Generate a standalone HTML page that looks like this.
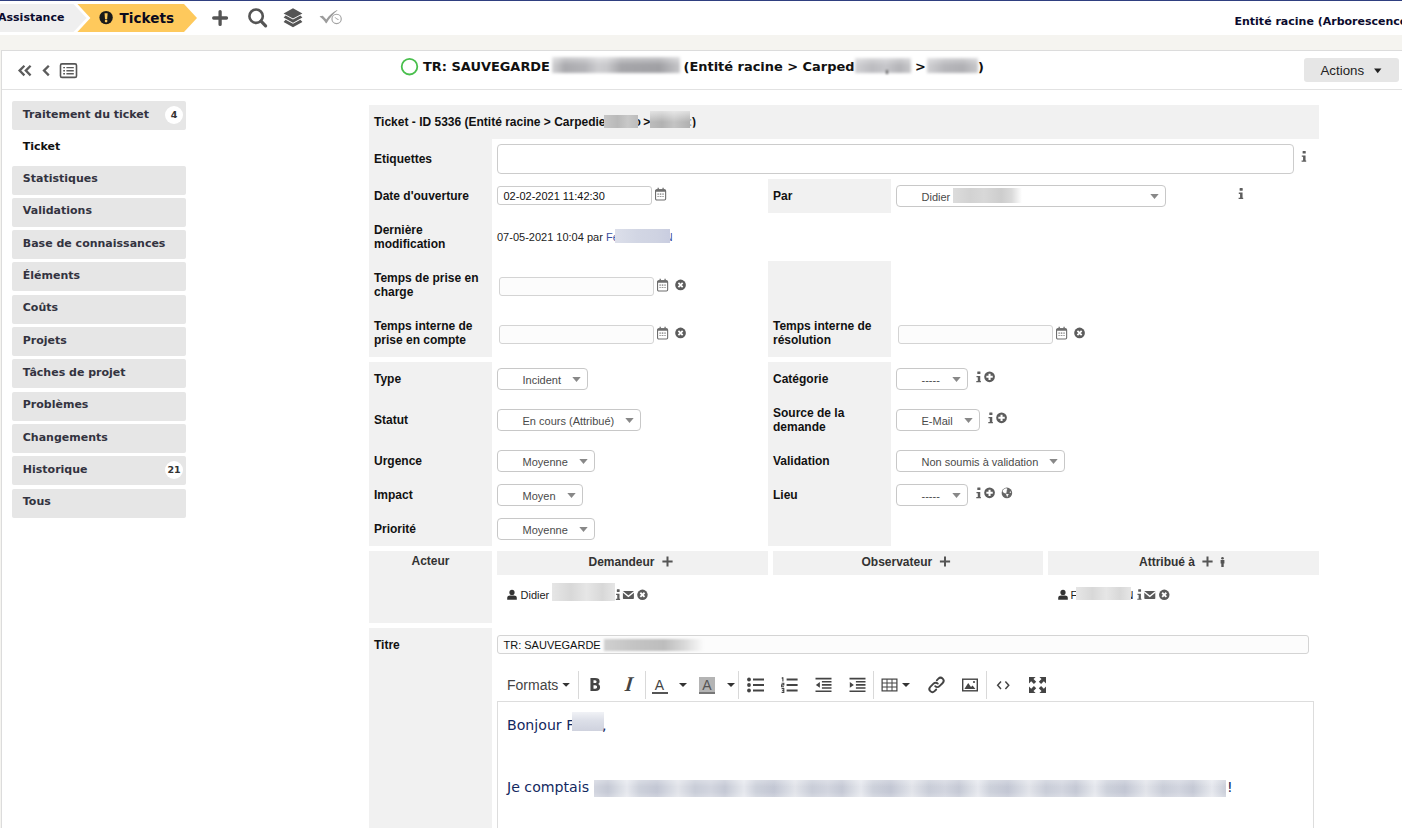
<!DOCTYPE html>
<html lang="fr"><head><meta charset="utf-8"><title>Ticket - ID 5336</title><style>
html,body{margin:0;padding:0}
body{width:1402px;height:828px;overflow:hidden;background:#f5f4f0;position:relative;font-family:"Liberation Sans",Arial,sans-serif}
#p{position:absolute;left:0;top:0;width:1402px;height:828px;overflow:hidden}
#p>div,#p>span,#p>svg{position:absolute;box-sizing:border-box}
#p>svg{overflow:visible}
.t{white-space:nowrap;line-height:1}
.l{font-family:"Liberation Sans",Arial,sans-serif}
.d{font-family:"DejaVu Sans",Verdana,sans-serif}
.b{font-weight:bold}
</style></head><body><div id="p">
<div style="left:0px;top:0px;width:1402px;height:35px;background:#fff;"></div>
<div style="left:0px;top:0px;width:1402px;height:1px;background:#2f3f80;"></div>
<svg style="left:0px;top:4px;" width="92" height="28" viewBox="0 0 92 28"><path d="M0 0H73.5L86.5 14L73.5 28H0z" fill="#efefef"/></svg>
<span class="t d b " style="left:-2px;top:12.19px;font-size:11px;color:#0b0b2e;">Assistance</span>
<svg style="left:77px;top:4px;" width="122" height="28" viewBox="0 0 122 28"><path d="M0.4 0H107L120 14L107 28H0.4L13.4 14z" fill="#fec95c"/></svg>
<svg style="left:99px;top:10px;transform:translate(0.4px,0.9px);" width="13.4" height="13.4" viewBox="0 0 16 16"><circle cx="8" cy="8" r="8" fill="#1a1a1a"/><path d="M6.2 2.9h3.6l-0.5 7h-2.6z" fill="#fec95c"/><circle cx="8" cy="12.2" r="1.6" fill="#fec95c"/></svg>
<span class="t d b " style="left:119.5px;top:12.09px;font-size:13.6px;color:#0a0a1e;">Tickets</span>
<svg style="left:211px;top:9px;" width="18" height="18" viewBox="0 0 18 18"><path d="M9.1 2.6V15.4M2.7 9H15.5" stroke="#555" stroke-width="3.3" stroke-linecap="round" fill="none"/></svg>
<svg style="left:247px;top:8px;" width="21" height="21" viewBox="0 0 21 21"><circle cx="9.1" cy="8.2" r="6.7" fill="none" stroke="#555" stroke-width="2.6"/><path d="M14 13.2L18.6 17.8" stroke="#555" stroke-width="3.2" stroke-linecap="round"/></svg>
<svg style="left:283px;top:8px;" width="20" height="20" viewBox="0 0 20 20"><path d="M10 0.2L19.4 5.4L10 10.6L0.6 5.4z M2.6 7.4L10 11.4L17.4 7.4L19.4 9.6L10 14.8L0.6 9.6z M2.6 11.8L10 15.8L17.4 11.8L19.4 14L10 19.2L0.6 14z" fill="#555"/></svg>
<svg style="left:319px;top:9px;" width="25" height="17" viewBox="0 0 25 17"><path d="M0.8 7.3L3.8 6.8L7.3 10.6C10 6.5 14 2.8 18.1 1L18.4 1.4C14.5 4.5 10.5 9 7.6 14.3L6.9 14.3C5.2 11.5 3 9.2 0.8 7.7z" fill="#9c9c9c"/><circle cx="17.6" cy="9.9" r="4.65" fill="#fff" stroke="#a2a2a2" stroke-width="1.15"/><path d="M16.1 8.3L17.7 10L19.5 10.5" stroke="#a2a2a2" stroke-width="1" fill="none"/></svg>
<span class="t d b " style="left:1234.5px;top:15.69px;font-size:11px;color:#0b0b2e;">Entité racine (Arborescence</span>
<div style="left:1px;top:50px;width:1403px;height:780px;background:#fff;border:1px solid #dcdcdc;"></div>
<div style="left:2px;top:89px;width:1402px;height:1px;background:#e2e2e2;"></div>
<svg style="left:17px;top:64px;transform:translate(0.2px,0.6px);" width="15" height="12" viewBox="0 0 15 12"><path d="M7.2 1.2L2.4 6L7.2 10.8M13.4 1.2L8.6 6L13.4 10.8" fill="none" stroke="#5c5c5c" stroke-width="2.3"/></svg>
<svg style="left:41px;top:64px;transform:translate(0.6px,0.6px);" width="9" height="12" viewBox="0 0 9 12"><path d="M7.2 1.2L2.4 6L7.2 10.8" fill="none" stroke="#5c5c5c" stroke-width="2.3"/></svg>
<svg style="left:59px;top:62px;transform:translate(0px,0.4px);" width="19" height="17" viewBox="0 0 19 17"><rect x="1.5" y="1.5" width="16" height="13.5" rx="1.5" fill="none" stroke="#555" stroke-width="1.6"/><path d="M4.2 5.2h1.8M7.4 5.2h7.4M4.2 8.3h1.8M7.4 8.3h7.4M4.2 11.4h1.8M7.4 11.4h7.4" stroke="#5c5c5c" stroke-width="1.4"/></svg>
<svg style="left:400px;top:57px;transform:translate(0px,0.2px);" width="19" height="19" viewBox="0 0 19 19"><circle cx="9.5" cy="9.5" r="7.8" fill="#fff" stroke="#49bf4d" stroke-width="1.8"/></svg>
<span class="t d b " style="left:423px;top:60.54px;font-size:12.95px;color:#111;">TR: SAUVEGARDE</span>
<div style="left:552px;top:56.5px;width:128px;height:16.5px;background:linear-gradient(180deg,rgba(255,255,255,.45),rgba(255,255,255,0) 50%),linear-gradient(90deg,#d2d2d4 0,#aaaaae 10%,#b4b4b8 26%,#cdcdd0 36%,#c8c8cb 43%,#a5a5a9 54%,#a0a0a4 84%,#c6c6c9 100%);filter:blur(1.4px)"></div>
<span class="t d b " style="left:683.5px;top:60.54px;font-size:12.95px;color:#111;">(Entité racine &gt; Carped</span>
<div style="left:855px;top:57.5px;width:56px;height:15.5px;background:linear-gradient(180deg,rgba(255,255,255,.4),rgba(255,255,255,0) 50%),linear-gradient(90deg,#d0d0d3 0,#bcbcc0 30%,#c6c6ca 55%,#b4b4b8 80%,#c8c8cb 100%);filter:blur(1.4px)"></div>
<div style="left:886.3px;top:70px;width:2.2px;height:3.6px;background:#666;filter:blur(0.8px);"></div>
<span class="t d b " style="left:915px;top:60.54px;font-size:12.95px;color:#111;">&gt;</span>
<div style="left:927px;top:57.5px;width:51px;height:15.5px;background:linear-gradient(180deg,rgba(255,255,255,.4),rgba(255,255,255,0) 50%),linear-gradient(90deg,#d0d0d3 0,#b6b6ba 35%,#b0b0b4 70%,#c8c8cb 100%);filter:blur(1.4px)"></div>
<span class="t d b " style="left:978px;top:60.54px;font-size:12.95px;color:#111;">)</span>
<div style="left:1304px;top:58px;width:95px;height:24px;background:#e6e6e6;border-radius:3px;"></div>
<span class="t l " style="left:1320.5px;top:63.74px;font-size:13.3px;color:#222;">Actions</span>
<svg style="left:1374px;top:68px;transform:translate(0px,0.6px);" width="7.5" height="4.6" viewBox="0 0 8 5"><path d="M0 0h8L4 5z" fill="#222"/></svg>
<div style="left:12px;top:101px;width:174px;height:29px;background:#e6e6e6;border-radius:2px;"></div>
<span class="t d b " style="left:22.8px;top:108.89px;font-size:11px;color:#333340;">Traitement du ticket</span>
<div style="left:165px;top:106px;width:18px;height:18px;background:#fff;border-radius:9px;"></div>
<span class="t d b" style="left:165px;width:18px;text-align:center;top:110.4px;font-size:9.5px;color:#333">4</span>
<span class="t d b " style="left:22.8px;top:140.89px;font-size:11px;color:#111;">Ticket</span>
<div style="left:12px;top:166px;width:174px;height:29px;background:#e6e6e6;border-radius:2px;"></div>
<span class="t d b " style="left:22.8px;top:172.89px;font-size:11px;color:#333340;">Statistiques</span>
<div style="left:12px;top:198px;width:174px;height:29px;background:#e6e6e6;border-radius:2px;"></div>
<span class="t d b " style="left:22.8px;top:204.89px;font-size:11px;color:#333340;">Validations</span>
<div style="left:12px;top:230px;width:174px;height:29px;background:#e6e6e6;border-radius:2px;"></div>
<span class="t d b " style="left:22.8px;top:237.89px;font-size:11px;color:#333340;">Base de connaissances</span>
<div style="left:12px;top:262px;width:174px;height:29px;background:#e6e6e6;border-radius:2px;"></div>
<span class="t d b " style="left:22.8px;top:269.89px;font-size:11px;color:#333340;">Éléments</span>
<div style="left:12px;top:295px;width:174px;height:29px;background:#e6e6e6;border-radius:2px;"></div>
<span class="t d b " style="left:22.8px;top:301.89px;font-size:11px;color:#333340;">Coûts</span>
<div style="left:12px;top:327px;width:174px;height:29px;background:#e6e6e6;border-radius:2px;"></div>
<span class="t d b " style="left:22.8px;top:334.89px;font-size:11px;color:#333340;">Projets</span>
<div style="left:12px;top:359px;width:174px;height:29px;background:#e6e6e6;border-radius:2px;"></div>
<span class="t d b " style="left:22.8px;top:366.89px;font-size:11px;color:#333340;">Tâches de projet</span>
<div style="left:12px;top:392px;width:174px;height:29px;background:#e6e6e6;border-radius:2px;"></div>
<span class="t d b " style="left:22.8px;top:398.89px;font-size:11px;color:#333340;">Problèmes</span>
<div style="left:12px;top:424px;width:174px;height:29px;background:#e6e6e6;border-radius:2px;"></div>
<span class="t d b " style="left:22.8px;top:431.89px;font-size:11px;color:#333340;">Changements</span>
<div style="left:12px;top:456px;width:174px;height:29px;background:#e6e6e6;border-radius:2px;"></div>
<span class="t d b " style="left:22.8px;top:463.89px;font-size:11px;color:#333340;">Historique</span>
<div style="left:165px;top:461px;width:18px;height:18px;background:#fff;border-radius:9px;"></div>
<span class="t d b" style="left:165px;width:18px;text-align:center;top:465.4px;font-size:9.5px;color:#333">21</span>
<div style="left:12px;top:489px;width:174px;height:29px;background:#e6e6e6;border-radius:2px;"></div>
<span class="t d b " style="left:22.8px;top:495.89px;font-size:11px;color:#333340;">Tous</span>
<div style="left:369px;top:105px;width:950px;height:34px;background:#f1f1f1;"></div>
<div style="left:369px;top:139px;width:123px;height:218px;background:#f1f1f1;"></div>
<div style="left:369px;top:362px;width:123px;height:184px;background:#f1f1f1;"></div>
<div style="left:768px;top:179px;width:123px;height:34px;background:#f1f1f1;"></div>
<div style="left:768px;top:261px;width:123px;height:96px;background:#f1f1f1;"></div>
<div style="left:768px;top:362px;width:123px;height:184px;background:#f1f1f1;"></div>
<div style="left:369px;top:551px;width:123px;height:72px;background:#f1f1f1;"></div>
<div style="left:497px;top:551px;width:271px;height:24px;background:#f1f1f1;"></div>
<div style="left:773px;top:551px;width:270px;height:24px;background:#f1f1f1;"></div>
<div style="left:1048px;top:551px;width:271px;height:24px;background:#f1f1f1;"></div>
<div style="left:369px;top:628px;width:123px;height:200px;background:#f1f1f1;"></div>
<span class="t l b " style="left:374px;top:115.84px;font-size:12px;color:#111;">Ticket - ID 5336 (Entité racine &gt; Carpedie</span>
<div style="left:604px;top:115px;width:34.2px;height:13px;background:linear-gradient(90deg,#c6c6c6,#b9b9b9 40%,#c8c8c8 70%,#bcbcbc);filter:blur(0.5px)"></div>
<span class="t l b " style="left:633.6px;top:115.84px;font-size:12px;color:#111;clip-path:inset(0 0 0 4.6px);">o</span>
<span class="t l b " style="left:643.2px;top:115.84px;font-size:12px;color:#111;">&gt;</span>
<div style="left:650.2px;top:111.3px;width:40px;height:16.6px;background:linear-gradient(180deg,rgba(255,255,255,.6),rgba(255,255,255,0) 65%),linear-gradient(90deg,#bcbcbc,#b2b2b2 30%,#c4c4c4 60%,#b0b0b0);filter:blur(0.6px)"></div>
<span class="t l b " style="left:688px;top:115.84px;font-size:12px;color:#111;clip-path:inset(0 0 0 2.6px);">:)</span>
<span class="t l b " style="left:374px;top:152.84px;font-size:12px;color:#111;">Etiquettes</span>
<span class="t l b " style="left:374px;top:189.84px;font-size:12px;color:#111;">Date d'ouverture</span>
<span class="t l b " style="left:374px;top:223.84px;font-size:12px;color:#111;">Dernière</span>
<span class="t l b " style="left:374px;top:237.84px;font-size:12px;color:#111;">modification</span>
<span class="t l b " style="left:374px;top:271.84px;font-size:12px;color:#111;">Temps de prise en</span>
<span class="t l b " style="left:374px;top:285.84px;font-size:12px;color:#111;">charge</span>
<span class="t l b " style="left:374px;top:319.84px;font-size:12px;color:#111;">Temps interne de</span>
<span class="t l b " style="left:374px;top:333.84px;font-size:12px;color:#111;">prise en compte</span>
<span class="t l b " style="left:374px;top:372.84px;font-size:12px;color:#111;">Type</span>
<span class="t l b " style="left:374px;top:413.84px;font-size:12px;color:#111;">Statut</span>
<span class="t l b " style="left:374px;top:454.84px;font-size:12px;color:#111;">Urgence</span>
<span class="t l b " style="left:374px;top:488.84px;font-size:12px;color:#111;">Impact</span>
<span class="t l b " style="left:374px;top:522.84px;font-size:12px;color:#111;">Priorité</span>
<span class="t l b " style="left:773px;top:189.84px;font-size:12px;color:#111;">Par</span>
<span class="t l b " style="left:773px;top:319.84px;font-size:12px;color:#111;">Temps interne de</span>
<span class="t l b " style="left:773px;top:333.84px;font-size:12px;color:#111;">résolution</span>
<span class="t l b " style="left:773px;top:372.84px;font-size:12px;color:#111;">Catégorie</span>
<span class="t l b " style="left:773px;top:407.34px;font-size:12px;color:#111;">Source de la</span>
<span class="t l b " style="left:773px;top:420.84px;font-size:12px;color:#111;">demande</span>
<span class="t l b " style="left:773px;top:454.84px;font-size:12px;color:#111;">Validation</span>
<span class="t l b " style="left:773px;top:488.84px;font-size:12px;color:#111;">Lieu</span>
<span class="t l b " style="left:374px;top:639.14px;font-size:12px;color:#111;">Titre</span>
<div style="left:497px;top:144px;width:797px;height:30px;border:1px solid #ccc;border-radius:4px;background:#fff;"></div>
<svg style="left:1301px;top:150px;transform:translate(0.6px,0.9px);" width="4.6" height="10.9" viewBox="0 0 5 10" preserveAspectRatio="none"><path d="M1.1 0.4Q1.1 0 1.5 0h2.6Q4.5 0 4.5 0.4v1.7Q4.5 2.5 4.1 2.5H1.5Q1.1 2.5 1.1 2.1z M0.2 4.2h4.1v4.7h0.7v1.1H0v-1.1h1.6V5.4H0.2z" fill="#5e5e5e"/></svg>
<div style="left:497px;top:186px;width:155px;height:19px;border:1px solid #ccc;border-radius:3px;background:#fff;"></div>
<span class="t l " style="left:503.5px;top:190.69px;font-size:11px;color:#111;">02-02-2021 11:42:30</span>
<svg style="left:655px;top:187px;transform:translate(0px,0.7px);" width="11.2" height="13" viewBox="0 0 11.2 13"><rect x="0.55" y="2" width="10.1" height="10.3" rx="1.2" fill="#fff" stroke="#6e6e6e" stroke-width="1.1"/><path d="M0.3 4V3.2Q0.3 1.6 1.8 1.6H9.4Q10.9 1.6 10.9 3.2V4z" fill="#6e6e6e"/><path d="M3.2 0v2M8.1 0v2" stroke="#6e6e6e" stroke-width="1.3"/><path d="M2.6 6.4h1.1M5 6.4h1.1M7.5 6.4h1.1M2.6 8.8h1.1M5 8.8h1.1M7.5 8.8h1.1" stroke="#666" stroke-width="1.1"/><path d="M2.3 6.4h6.6M2.3 8.8h6.6" stroke="#bbb" stroke-width="0.6"/></svg>
<span class="t l " style="left:497px;top:232.19px;font-size:11px;color:#222;">07-05-2021 10:04 par</span>
<span class="t l " style="left:606px;top:232.19px;font-size:11px;color:#3a4fa0;">Fe</span>
<div style="left:615.3px;top:228.8px;width:54.8px;height:14px;background:linear-gradient(90deg,#dcdfea,#d2d6e4 40%,#cfd3e2 75%,#c9cde0);filter:blur(0.5px)"></div>
<span class="t l " style="left:664.8px;top:232.19px;font-size:11px;color:#3a4fa0;clip-path:inset(0 0 0 5.4px);">N</span>
<div style="left:499px;top:277px;width:155px;height:19px;border:1px solid #d4d4d4;border-radius:3px;background:#fff;background:#fcfcfc;"></div>
<svg style="left:657px;top:278px;transform:translate(0px,0.7px);" width="11.2" height="13" viewBox="0 0 11.2 13"><rect x="0.55" y="2" width="10.1" height="10.3" rx="1.2" fill="#fff" stroke="#6e6e6e" stroke-width="1.1"/><path d="M0.3 4V3.2Q0.3 1.6 1.8 1.6H9.4Q10.9 1.6 10.9 3.2V4z" fill="#6e6e6e"/><path d="M3.2 0v2M8.1 0v2" stroke="#6e6e6e" stroke-width="1.3"/><path d="M2.6 6.4h1.1M5 6.4h1.1M7.5 6.4h1.1M2.6 8.8h1.1M5 8.8h1.1M7.5 8.8h1.1" stroke="#666" stroke-width="1.1"/><path d="M2.3 6.4h6.6M2.3 8.8h6.6" stroke="#bbb" stroke-width="0.6"/></svg>
<svg style="left:675px;top:279px;transform:translate(0.2px,0.6px);" width="10.7" height="10.7" viewBox="0 0 11 11"><circle cx="5.5" cy="5.5" r="5.5" fill="#5c5c5c"/><path d="M3.3 3.3L7.7 7.7M7.7 3.3L3.3 7.7" stroke="#fff" stroke-width="1.9"/></svg>
<div style="left:499px;top:325px;width:155px;height:19px;border:1px solid #d4d4d4;border-radius:3px;background:#fff;background:#fcfcfc;"></div>
<svg style="left:657px;top:326px;transform:translate(0px,0.7px);" width="11.2" height="13" viewBox="0 0 11.2 13"><rect x="0.55" y="2" width="10.1" height="10.3" rx="1.2" fill="#fff" stroke="#6e6e6e" stroke-width="1.1"/><path d="M0.3 4V3.2Q0.3 1.6 1.8 1.6H9.4Q10.9 1.6 10.9 3.2V4z" fill="#6e6e6e"/><path d="M3.2 0v2M8.1 0v2" stroke="#6e6e6e" stroke-width="1.3"/><path d="M2.6 6.4h1.1M5 6.4h1.1M7.5 6.4h1.1M2.6 8.8h1.1M5 8.8h1.1M7.5 8.8h1.1" stroke="#666" stroke-width="1.1"/><path d="M2.3 6.4h6.6M2.3 8.8h6.6" stroke="#bbb" stroke-width="0.6"/></svg>
<svg style="left:675px;top:327px;transform:translate(0.2px,0.6px);" width="10.7" height="10.7" viewBox="0 0 11 11"><circle cx="5.5" cy="5.5" r="5.5" fill="#5c5c5c"/><path d="M3.3 3.3L7.7 7.7M7.7 3.3L3.3 7.7" stroke="#fff" stroke-width="1.9"/></svg>
<div style="left:898px;top:325px;width:155px;height:19px;border:1px solid #d4d4d4;border-radius:3px;background:#fff;background:#fcfcfc;"></div>
<svg style="left:1056px;top:326px;transform:translate(0px,0.7px);" width="11.2" height="13" viewBox="0 0 11.2 13"><rect x="0.55" y="2" width="10.1" height="10.3" rx="1.2" fill="#fff" stroke="#6e6e6e" stroke-width="1.1"/><path d="M0.3 4V3.2Q0.3 1.6 1.8 1.6H9.4Q10.9 1.6 10.9 3.2V4z" fill="#6e6e6e"/><path d="M3.2 0v2M8.1 0v2" stroke="#6e6e6e" stroke-width="1.3"/><path d="M2.6 6.4h1.1M5 6.4h1.1M7.5 6.4h1.1M2.6 8.8h1.1M5 8.8h1.1M7.5 8.8h1.1" stroke="#666" stroke-width="1.1"/><path d="M2.3 6.4h6.6M2.3 8.8h6.6" stroke="#bbb" stroke-width="0.6"/></svg>
<svg style="left:1074px;top:327px;transform:translate(0.2px,0.6px);" width="10.7" height="10.7" viewBox="0 0 11 11"><circle cx="5.5" cy="5.5" r="5.5" fill="#5c5c5c"/><path d="M3.3 3.3L7.7 7.7M7.7 3.3L3.3 7.7" stroke="#fff" stroke-width="1.9"/></svg>
<div style="left:896px;top:185px;width:270px;height:22px;border:1px solid #c8c8c8;border-radius:4px;background:#fff;"></div>
<span class="t l " style="left:921.5px;top:191.69px;font-size:11px;color:#4a4a4a;">Didier</span>
<svg style="left:1150px;top:194px;" width="9" height="5" viewBox="0 0 9 5"><path d="M0.3 0h8.4L4.5 5z" fill="#888"/></svg>
<div style="left:953px;top:188.2px;width:69px;height:14.5px;background:linear-gradient(90deg,#dcdcdc,#d2d2d2 25%,#d8d8d8 45%,#cdcdcd 70%,#dadada 85%,#fff);filter:blur(0.7px)"></div>
<svg style="left:1238px;top:188px;transform:translate(0.6px,0px);" width="4.6" height="10.9" viewBox="0 0 5 10" preserveAspectRatio="none"><path d="M1.1 0.4Q1.1 0 1.5 0h2.6Q4.5 0 4.5 0.4v1.7Q4.5 2.5 4.1 2.5H1.5Q1.1 2.5 1.1 2.1z M0.2 4.2h4.1v4.7h0.7v1.1H0v-1.1h1.6V5.4H0.2z" fill="#5e5e5e"/></svg>
<div style="left:497px;top:368px;width:91px;height:22px;border:1px solid #c8c8c8;border-radius:4px;background:#fff;"></div>
<span class="t l " style="left:522.5px;top:374.69px;font-size:11px;color:#4a4a4a;">Incident</span>
<svg style="left:572px;top:377px;" width="9" height="5" viewBox="0 0 9 5"><path d="M0.3 0h8.4L4.5 5z" fill="#888"/></svg>
<div style="left:497px;top:409px;width:144px;height:22px;border:1px solid #c8c8c8;border-radius:4px;background:#fff;"></div>
<span class="t l " style="left:522.5px;top:415.69px;font-size:11px;color:#4a4a4a;">En cours (Attribué)</span>
<svg style="left:625px;top:418px;" width="9" height="5" viewBox="0 0 9 5"><path d="M0.3 0h8.4L4.5 5z" fill="#888"/></svg>
<div style="left:497px;top:450px;width:98px;height:22px;border:1px solid #c8c8c8;border-radius:4px;background:#fff;"></div>
<span class="t l " style="left:522.5px;top:456.69px;font-size:11px;color:#4a4a4a;">Moyenne</span>
<svg style="left:579px;top:459px;" width="9" height="5" viewBox="0 0 9 5"><path d="M0.3 0h8.4L4.5 5z" fill="#888"/></svg>
<div style="left:497px;top:484px;width:86px;height:22px;border:1px solid #c8c8c8;border-radius:4px;background:#fff;"></div>
<span class="t l " style="left:522.5px;top:490.69px;font-size:11px;color:#4a4a4a;">Moyen</span>
<svg style="left:567px;top:493px;" width="9" height="5" viewBox="0 0 9 5"><path d="M0.3 0h8.4L4.5 5z" fill="#888"/></svg>
<div style="left:497px;top:518px;width:98px;height:22px;border:1px solid #c8c8c8;border-radius:4px;background:#fff;"></div>
<span class="t l " style="left:522.5px;top:524.69px;font-size:11px;color:#4a4a4a;">Moyenne</span>
<svg style="left:579px;top:527px;" width="9" height="5" viewBox="0 0 9 5"><path d="M0.3 0h8.4L4.5 5z" fill="#888"/></svg>
<div style="left:896px;top:368px;width:72px;height:22px;border:1px solid #c8c8c8;border-radius:4px;background:#fff;"></div>
<span class="t l " style="left:921.5px;top:374.69px;font-size:11px;color:#4a4a4a;">-----</span>
<svg style="left:952px;top:377px;" width="9" height="5" viewBox="0 0 9 5"><path d="M0.3 0h8.4L4.5 5z" fill="#888"/></svg>
<div style="left:896px;top:409px;width:84px;height:22px;border:1px solid #c8c8c8;border-radius:4px;background:#fff;"></div>
<span class="t l " style="left:921.5px;top:415.69px;font-size:11px;color:#4a4a4a;">E-Mail</span>
<svg style="left:964px;top:418px;" width="9" height="5" viewBox="0 0 9 5"><path d="M0.3 0h8.4L4.5 5z" fill="#888"/></svg>
<div style="left:896px;top:450px;width:169px;height:22px;border:1px solid #c8c8c8;border-radius:4px;background:#fff;"></div>
<span class="t l " style="left:921.5px;top:456.69px;font-size:11px;color:#4a4a4a;">Non soumis à validation</span>
<svg style="left:1049px;top:459px;" width="9" height="5" viewBox="0 0 9 5"><path d="M0.3 0h8.4L4.5 5z" fill="#888"/></svg>
<div style="left:896px;top:484px;width:72px;height:22px;border:1px solid #c8c8c8;border-radius:4px;background:#fff;"></div>
<span class="t l " style="left:921.5px;top:490.69px;font-size:11px;color:#4a4a4a;">-----</span>
<svg style="left:952px;top:493px;" width="9" height="5" viewBox="0 0 9 5"><path d="M0.3 0h8.4L4.5 5z" fill="#888"/></svg>
<svg style="left:976px;top:371px;transform:translate(0.3px,0.4px);" width="4.6" height="10.9" viewBox="0 0 5 10" preserveAspectRatio="none"><path d="M1.1 0.4Q1.1 0 1.5 0h2.6Q4.5 0 4.5 0.4v1.7Q4.5 2.5 4.1 2.5H1.5Q1.1 2.5 1.1 2.1z M0.2 4.2h4.1v4.7h0.7v1.1H0v-1.1h1.6V5.4H0.2z" fill="#5e5e5e"/></svg>
<svg style="left:984px;top:371px;transform:translate(0.2px,0.5px);" width="10.7" height="10.7" viewBox="0 0 11 11"><circle cx="5.5" cy="5.5" r="5.5" fill="#5c5c5c"/><path d="M5.5 2.2V8.8M2.2 5.5H8.8" stroke="#fff" stroke-width="2.1"/></svg>
<svg style="left:988px;top:412px;transform:translate(0.3px,0.4px);" width="4.6" height="10.9" viewBox="0 0 5 10" preserveAspectRatio="none"><path d="M1.1 0.4Q1.1 0 1.5 0h2.6Q4.5 0 4.5 0.4v1.7Q4.5 2.5 4.1 2.5H1.5Q1.1 2.5 1.1 2.1z M0.2 4.2h4.1v4.7h0.7v1.1H0v-1.1h1.6V5.4H0.2z" fill="#5e5e5e"/></svg>
<svg style="left:996px;top:412px;transform:translate(0.2px,0.5px);" width="10.7" height="10.7" viewBox="0 0 11 11"><circle cx="5.5" cy="5.5" r="5.5" fill="#5c5c5c"/><path d="M5.5 2.2V8.8M2.2 5.5H8.8" stroke="#fff" stroke-width="2.1"/></svg>
<svg style="left:976px;top:487px;transform:translate(0.3px,0.4px);" width="4.6" height="10.9" viewBox="0 0 5 10" preserveAspectRatio="none"><path d="M1.1 0.4Q1.1 0 1.5 0h2.6Q4.5 0 4.5 0.4v1.7Q4.5 2.5 4.1 2.5H1.5Q1.1 2.5 1.1 2.1z M0.2 4.2h4.1v4.7h0.7v1.1H0v-1.1h1.6V5.4H0.2z" fill="#5e5e5e"/></svg>
<svg style="left:984px;top:487px;transform:translate(0.2px,0.5px);" width="10.7" height="10.7" viewBox="0 0 11 11"><circle cx="5.5" cy="5.5" r="5.5" fill="#5c5c5c"/><path d="M5.5 2.2V8.8M2.2 5.5H8.8" stroke="#fff" stroke-width="2.1"/></svg>
<svg style="left:1001px;top:487px;transform:translate(0.6px,0.6px);" width="10.6" height="10.6" viewBox="0 0 11 11"><circle cx="5.5" cy="5.5" r="5.5" fill="#666"/><path fill="#fff" d="M1.1 3.7C1.5 2.2 3 0.9 4.9 0.7L6.1 1.5L5 2.7L5.9 3.5L4.3 4.7L5.7 5.4L4.1 6C3 5.9 1.5 5.1 1.1 3.7z"/><path fill="#fff" d="M4.5 6.5L7.6 6.9L6.5 8.2L5.9 9.9L5.2 8.4z"/><circle cx="9.1" cy="4.7" r="0.75" fill="#fff"/></svg>
<span class="t l b" style="left:369px;width:123px;text-align:center;top:555.34px;font-size:12px;color:#333">Acteur</span>
<span class="t l b " style="left:588.5px;top:555.84px;font-size:12px;color:#333;">Demandeur</span>
<svg style="left:662px;top:556px;" width="11" height="11" viewBox="0 0 11 11"><path d="M4.5 0.4h2v4.1h4.1v2H6.5v4.1H4.5V6.5H0.4V4.5h4.1z" fill="#555"/></svg>
<span class="t l b " style="left:861.5px;top:555.84px;font-size:12px;color:#333;">Observateur</span>
<svg style="left:939px;top:556px;transform:translate(0.5px,0px);" width="11" height="11" viewBox="0 0 11 11"><path d="M4.5 0.4h2v4.1h4.1v2H6.5v4.1H4.5V6.5H0.4V4.5h4.1z" fill="#555"/></svg>
<span class="t l b " style="left:1139px;top:555.84px;font-size:12px;color:#333;">Attribué à</span>
<svg style="left:1202px;top:556px;" width="11" height="11" viewBox="0 0 11 11"><path d="M4.5 0.4h2v4.1h4.1v2H6.5v4.1H4.5V6.5H0.4V4.5h4.1z" fill="#555"/></svg>
<svg style="left:1220px;top:557px;" width="5" height="10" viewBox="0 0 5 10"><circle cx="2.5" cy="1.3" r="1.3" fill="#555"/><path d="M0.6 3h3.8v3.6H3.7V10H1.3V6.6H0.6z" fill="#555"/></svg>
<svg style="left:507px;top:589px;transform:translate(0px,0.8px);" width="10" height="10" viewBox="0 0 10 10"><circle cx="5" cy="2.6" r="2.6" fill="#333"/><path d="M0.2 10V8.2C0.2 6.6 1.6 5.8 3 5.8H7C8.4 5.8 9.8 6.6 9.8 8.2V10z" fill="#333"/></svg>
<span class="t l " style="left:520.5px;top:589.69px;font-size:11px;color:#222;">Didier</span>
<div style="left:552px;top:583px;width:62.5px;height:17.6px;background:linear-gradient(90deg,#e6e6e6,#d8d8d8 30%,#e6e6e6 55%,#d8d8d8 80%,#e6e6e6);filter:blur(0.5px);"></div>
<svg style="left:615px;top:589px;transform:translate(0.9px,0.2px);" width="4.2" height="10.8" viewBox="0 0 5 10" preserveAspectRatio="none"><path d="M1.1 0.4Q1.1 0 1.5 0h2.6Q4.5 0 4.5 0.4v1.7Q4.5 2.5 4.1 2.5H1.5Q1.1 2.5 1.1 2.1z M0.2 4.2h4.1v4.7h0.7v1.1H0v-1.1h1.6V5.4H0.2z" fill="#5e5e5e"/></svg>
<svg style="left:622px;top:591px;transform:translate(0.9px,0px);" width="11" height="8" viewBox="0 0 11 8"><rect x="0" y="0" width="11" height="8" rx="0.8" fill="#5a5a5a"/><path d="M-0.2 0.8L5.5 5.4L11.2 0.8" fill="none" stroke="#fff" stroke-width="1.35"/></svg>
<svg style="left:637px;top:589px;transform:translate(0.2px,0.6px);" width="10.5" height="10.5" viewBox="0 0 11 11"><circle cx="5.5" cy="5.5" r="5.5" fill="#5c5c5c"/><path d="M3.3 3.3L7.7 7.7M7.7 3.3L3.3 7.7" stroke="#fff" stroke-width="1.9"/></svg>
<svg style="left:1058px;top:589px;transform:translate(0px,0.8px);" width="10" height="10" viewBox="0 0 10 10"><circle cx="5" cy="2.6" r="2.6" fill="#333"/><path d="M0.2 10V8.2C0.2 6.6 1.6 5.8 3 5.8H7C8.4 5.8 9.8 6.6 9.8 8.2V10z" fill="#333"/></svg>
<span class="t l " style="left:1070.5px;top:589.69px;font-size:11px;color:#222;">F</span>
<div style="left:1076px;top:587.3px;width:55px;height:13px;background:linear-gradient(90deg,#e6e6e6,#d8d8d8 30%,#e6e6e6 55%,#d8d8d8 80%,#e6e6e6);filter:blur(0.5px);"></div>
<span class="t l " style="left:1125.4px;top:589.69px;font-size:11px;color:#222;clip-path:inset(0 0 0 5.6px);">N</span>
<svg style="left:1137px;top:589px;transform:translate(0.3px,0.2px);" width="4.2" height="10.6" viewBox="0 0 5 10" preserveAspectRatio="none"><path d="M1.1 0.4Q1.1 0 1.5 0h2.6Q4.5 0 4.5 0.4v1.7Q4.5 2.5 4.1 2.5H1.5Q1.1 2.5 1.1 2.1z M0.2 4.2h4.1v4.7h0.7v1.1H0v-1.1h1.6V5.4H0.2z" fill="#5e5e5e"/></svg>
<svg style="left:1144px;top:591px;transform:translate(0.3px,0px);" width="11" height="8" viewBox="0 0 11 8"><rect x="0" y="0" width="11" height="8" rx="0.8" fill="#5a5a5a"/><path d="M-0.2 0.8L5.5 5.4L11.2 0.8" fill="none" stroke="#fff" stroke-width="1.35"/></svg>
<svg style="left:1159px;top:589px;transform:translate(0px,0.6px);" width="10.5" height="10.5" viewBox="0 0 11 11"><circle cx="5.5" cy="5.5" r="5.5" fill="#5c5c5c"/><path d="M3.3 3.3L7.7 7.7M7.7 3.3L3.3 7.7" stroke="#fff" stroke-width="1.9"/></svg>
<div style="left:497px;top:635px;width:812px;height:19px;border:1px solid #d4d4d4;border-radius:3px;background:#fff;background:#fcfcfc;"></div>
<span class="t l " style="left:503.5px;top:639.89px;font-size:11px;color:#111;">TR: SAUVEGARDE</span>
<div style="left:604px;top:639px;width:100px;height:12px;background:linear-gradient(90deg,#d0d0d0,#c4c4c4 30%,#bdbdbd 60%,#d8d8d8 80%,#fcfcfc);filter:blur(1px)"></div>
<span class="t l " style="left:507px;top:678.15px;font-size:14px;color:#444;">Formats</span>
<svg style="left:562px;top:683px;transform:translate(0.3px,0px);" width="7.6" height="3.8" viewBox="0 0 8 4"><path d="M0 0h8L4 4z" fill="#333"/></svg>
<div style="left:578px;top:671px;width:1px;height:28px;background:#d9d9d9;"></div>
<div style="left:645px;top:671px;width:1px;height:28px;background:#d9d9d9;"></div>
<div style="left:738px;top:671px;width:1px;height:28px;background:#d9d9d9;"></div>
<div style="left:873px;top:671px;width:1px;height:28px;background:#d9d9d9;"></div>
<div style="left:986px;top:671px;width:1px;height:28px;background:#d9d9d9;"></div>
<span class="t b d" style="left:588.6px;top:676px;font-size:17.8px;color:#444;transform-origin:0 0;transform:scaleX(0.9)">B</span>
<span class="t" style="left:624.6px;top:674.3px;font-size:21px;font-family:'Liberation Serif',serif;font-style:italic;font-weight:bold;color:#444;transform:skewX(-7deg) scaleX(0.92)">I</span>
<span class="t l " style="left:654.8px;top:677.65px;font-size:14px;color:#444;">A</span>
<div style="left:652.3px;top:692px;width:15.6px;height:1.6px;background:#555;"></div>
<svg style="left:679px;top:683px;" width="8" height="4" viewBox="0 0 8 4"><path d="M0 0h8L4 4z" fill="#333"/></svg>
<div style="left:699px;top:677px;width:16px;height:16.5px;background:#b4b4b4;"></div>
<span class="t l " style="left:702.3px;top:677.65px;font-size:14px;color:#555;">A</span>
<div style="left:699px;top:692px;width:16px;height:1.5px;background:#777;"></div>
<svg style="left:727px;top:683px;" width="8" height="4" viewBox="0 0 8 4"><path d="M0 0h8L4 4z" fill="#333"/></svg>
<svg style="left:747px;top:677px;" width="17" height="16" viewBox="0 0 17 16"><circle cx="2" cy="2.5" r="1.9" fill="#444"/><circle cx="2" cy="8" r="1.9" fill="#444"/><circle cx="2" cy="13.5" r="1.9" fill="#444"/><path d="M6 2.5h11M6 8h11M6 13.5h11" stroke="#444" stroke-width="1.8"/></svg>
<svg style="left:781px;top:677px;" width="17" height="16" viewBox="0 0 17 16"><path d="M5.6 2.4h11M5.6 8h11M5.6 13.6h11" stroke="#444" stroke-width="2"/><path d="M1.9 0.3v4.2M0.7 1.3l1.2-1M0.6 6.2h2.2v1.7h-2.2v1.8h2.4M0.6 11.6h2.2v3.8H0.6M1.2 13.5h1.6" stroke="#444" stroke-width="1.1" fill="none"/></svg>
<svg style="left:815px;top:677px;transform:translate(0.5px,0.6px);" width="16" height="15" viewBox="0 0 16 15"><path d="M0 1h16M6.4 4.15h9.6M6.4 7.3h9.6M6.4 10.45h9.6M0 13.6h16" stroke="#444" stroke-width="1.6"/><path d="M4.4 4.4v5.8L0.3 7.3z" fill="#444"/></svg>
<svg style="left:849px;top:677px;transform:translate(0.5px,0.6px);" width="16" height="15" viewBox="0 0 16 15"><path d="M0 1h16M6.4 4.15h9.6M6.4 7.3h9.6M6.4 10.45h9.6M0 13.6h16" stroke="#444" stroke-width="1.6"/><path d="M0.3 4.4v5.8L4.4 7.3z" fill="#444"/></svg>
<svg style="left:881px;top:678px;transform:translate(0.5px,0.5px);" width="16" height="13" viewBox="0 0 16 13"><rect x="0.6" y="0.6" width="14.8" height="11.8" fill="none" stroke="#444" stroke-width="1.2"/><path d="M0.6 4.5h14.8M0.6 8.5h14.8M5.5 0.6v11.8M10.5 0.6v11.8" stroke="#444" stroke-width="1"/></svg>
<svg style="left:902px;top:683px;" width="8" height="4" viewBox="0 0 8 4"><path d="M0 0h8L4 4z" fill="#333"/></svg>
<svg style="left:928px;top:676px;transform:translate(0px,0.4px);" width="17" height="17" viewBox="0 0 17 17"><g fill="none" stroke="#444" stroke-width="1.9" stroke-linecap="round"><path d="M7.2 9.8a3 3 0 0 0 4.3 0l3.2-3.2a3 3 0 0 0-4.3-4.3L8.8 3.9"/><path d="M9.8 7.2a3 3 0 0 0-4.3 0L2.3 10.4a3 3 0 0 0 4.3 4.3l1.6-1.6"/></g></svg>
<svg style="left:962px;top:678px;transform:translate(0px,0.5px);" width="16" height="13" viewBox="0 0 16 13"><rect x="0.7" y="0.7" width="14.6" height="11.6" fill="#fff" stroke="#444" stroke-width="1.4"/><path d="M2.4 10.6L6.2 4.6L9 8.4L10.6 7L13.4 10.6z" fill="#444"/><circle cx="12" cy="3.5" r="1.1" fill="#444"/></svg>
<svg style="left:996px;top:680px;transform:translate(0.4px,0.8px);" width="13.6" height="8.8" viewBox="0 0 15 10"><path d="M5 0.8L1.2 5L5 9.2M10 0.8L13.8 5L10 9.2" fill="none" stroke="#444" stroke-width="1.7"/></svg>
<svg style="left:1029px;top:677px;" width="17" height="16" viewBox="0 0 17 16"><path d="M0 0h6.6L4.5 2.1L7.2 4.7L4.9 7L2.2 4.3L0 6.4zM17 0v6.4L14.8 4.3L12.1 7L9.8 4.7L12.5 2.1L10.4 0zM0 16V9.6l2.2 2.1L4.9 9L7.2 11.3L4.5 13.9L6.6 16zM17 16h-6.6l2.1-2.1L9.8 11.3L12.1 9l2.7 2.7L17 9.6z" fill="#444"/></svg>
<div style="left:497px;top:701px;width:817px;height:140px;background:#fff;border:1px solid #ddd;"></div>
<span class="t d " style="left:507px;top:718.03px;font-size:14.15px;color:#13295f;">Bonjour F</span>
<div style="left:572px;top:711.8px;width:32.4px;height:19px;background:linear-gradient(180deg,#f1f2f6,#dcdfe8 45%,#cfd2de);filter:blur(0.5px)"></div>
<span class="t d " style="left:602px;top:718.03px;font-size:14.15px;color:#13295f;">,</span>
<span class="t d " style="left:507px;top:780.03px;font-size:14.15px;color:#13295f;">Je comptais</span>
<div style="left:594px;top:779.6px;width:632px;height:17.4px;background:linear-gradient(180deg,rgba(255,255,255,.25),rgba(255,255,255,0) 40%,rgba(255,255,255,0) 70%,rgba(255,255,255,.2)),repeating-linear-gradient(90deg,#d2d5df 0,#c5c9d5 14px,#dcdfe6 27px,#e6e8ee 33px,#cdd1db 45px,#c3c7d4 63px,#d9dce4 78px,#e2e4ea 84px,#c9cdd8 101px,#d2d5df 117px);filter:blur(0.7px)"></div>
<span class="t d " style="left:1227px;top:780.03px;font-size:14.15px;color:#13295f;">!</span>
</div></body></html>
